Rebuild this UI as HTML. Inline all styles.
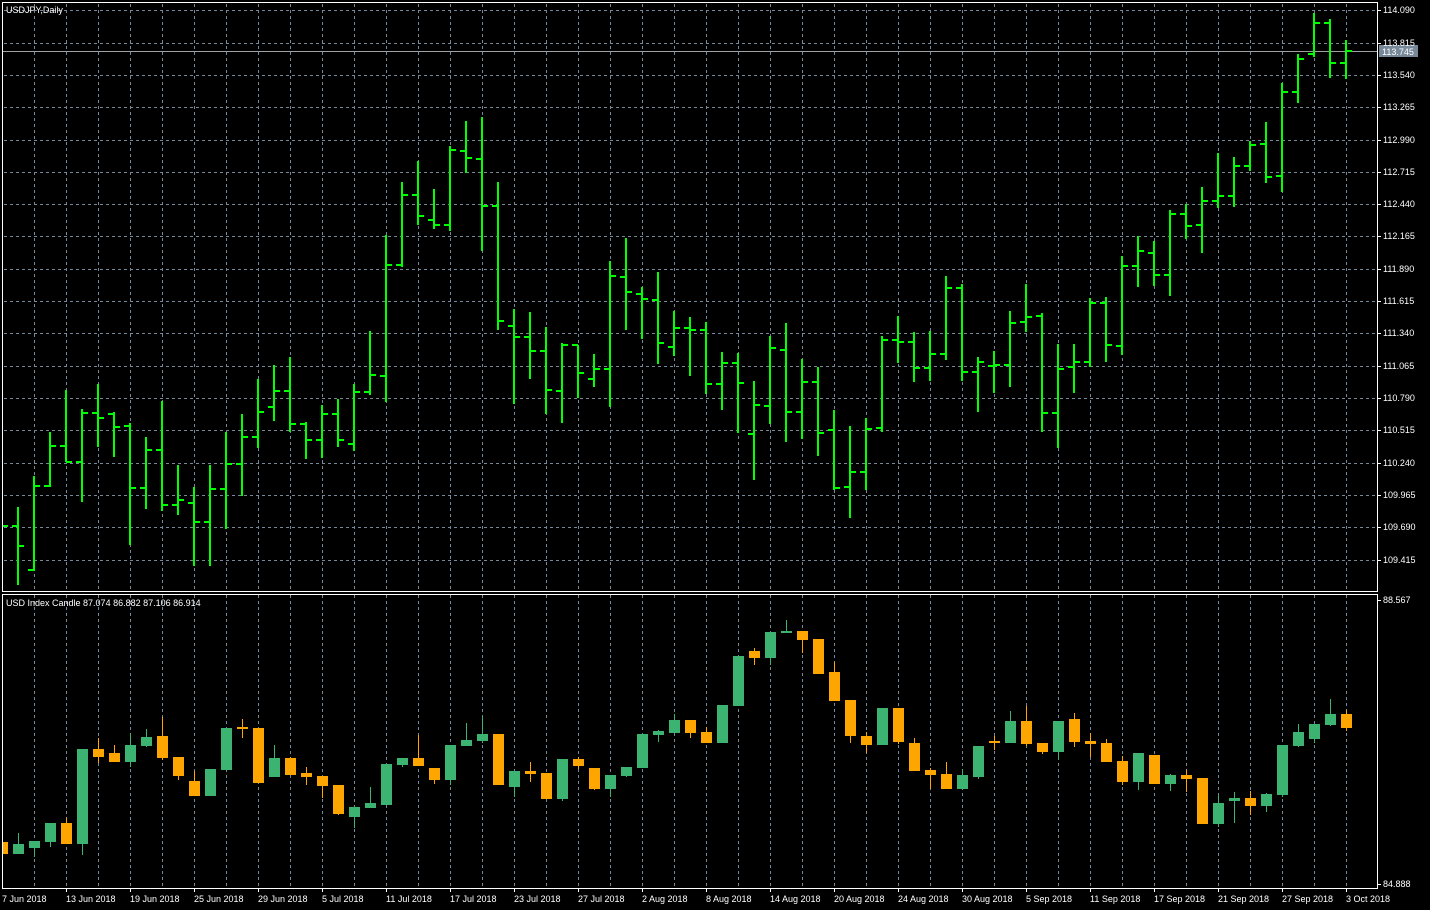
<!DOCTYPE html>
<html><head><meta charset="utf-8"><style>
html,body{margin:0;padding:0;background:#000;width:1430px;height:910px;overflow:hidden}
svg{display:block}
text{font-family:"Liberation Sans",sans-serif;font-size:9px;fill:#fff}
</style></head><body>
<svg width="1430" height="910" viewBox="0 0 1430 910" xmlns="http://www.w3.org/2000/svg">
<rect width="1430" height="910" fill="#000"/>
<!-- vertical grid -->
<g stroke="#778899" stroke-width="1" stroke-dasharray="3,3">
<path d="M34.5 4V591M66.5 4V591M98.5 4V591M130.5 4V591M162.5 4V591M194.5 4V591M226.5 4V591M258.5 4V591M290.5 4V591M322.5 4V591M354.5 4V591M386.5 4V591M418.5 4V591M450.5 4V591M482.5 4V591M514.5 4V591M546.5 4V591M578.5 4V591M610.5 4V591M642.5 4V591M674.5 4V591M706.5 4V591M738.5 4V591M770.5 4V591M802.5 4V591M834.5 4V591M866.5 4V591M898.5 4V591M930.5 4V591M962.5 4V591M994.5 4V591M1026.5 4V591M1058.5 4V591M1090.5 4V591M1122.5 4V591M1154.5 4V591M1186.5 4V591M1218.5 4V591M1250.5 4V591M1282.5 4V591M1314.5 4V591M1346.5 4V591"/>
<path d="M34.5 595V888M66.5 595V888M98.5 595V888M130.5 595V888M162.5 595V888M194.5 595V888M226.5 595V888M258.5 595V888M290.5 595V888M322.5 595V888M354.5 595V888M386.5 595V888M418.5 595V888M450.5 595V888M482.5 595V888M514.5 595V888M546.5 595V888M578.5 595V888M610.5 595V888M642.5 595V888M674.5 595V888M706.5 595V888M738.5 595V888M770.5 595V888M802.5 595V888M834.5 595V888M866.5 595V888M898.5 595V888M930.5 595V888M962.5 595V888M994.5 595V888M1026.5 595V888M1058.5 595V888M1090.5 595V888M1122.5 595V888M1154.5 595V888M1186.5 595V888M1218.5 595V888M1250.5 595V888M1282.5 595V888M1314.5 595V888M1346.5 595V888"/>
<path d="M4 10.5H1377M4 43.5H1377M4 75.5H1377M4 107.5H1377M4 140.5H1377M4 172.5H1377M4 204.5H1377M4 236.5H1377M4 269.5H1377M4 301.5H1377M4 333.5H1377M4 366.5H1377M4 398.5H1377M4 430.5H1377M4 463.5H1377M4 495.5H1377M4 527.5H1377M4 560.5H1377"/>
</g>
<!-- current price line -->
<path d="M3 51.5H1377" stroke="#a0a0a0" stroke-width="1"/>
<!-- frames -->
<g fill="none" stroke="#fff" stroke-width="1">
<path d="M2.5 2.5H1377.5V591.5H2.5Z"/>
<path d="M2.5 594.5H1377.5V888.5H2.5Z"/>
</g>
<!-- axis ticks -->
<g stroke="#fff" stroke-width="1">
<path d="M1377 10.5h4M1377 43.5h4M1377 75.5h4M1377 107.5h4M1377 140.5h4M1377 172.5h4M1377 204.5h4M1377 236.5h4M1377 269.5h4M1377 301.5h4M1377 333.5h4M1377 366.5h4M1377 398.5h4M1377 430.5h4M1377 463.5h4M1377 495.5h4M1377 527.5h4M1377 560.5h4M1377 600.5h4M1377 884.5h4"/>
<path d="M66.5 888v4M130.5 888v4M194.5 888v4M258.5 888v4M322.5 888v4M386.5 888v4M450.5 888v4M514.5 888v4M578.5 888v4M642.5 888v4M706.5 888v4M770.5 888v4M834.5 888v4M898.5 888v4M962.5 888v4M1026.5 888v4M1090.5 888v4M1154.5 888v4M1218.5 888v4M1282.5 888v4M1346.5 888v4"/>
</g>
<!-- OHLC bars -->
<path fill="none" stroke="#00ff00" stroke-width="2" d="
M3 526H8
M18 507V585M12 526H18M18 546H24
M34 476V571M28 570H34M34 486H40
M50 432V487M44 486H50M50 446H56
M66 390V462M60 446H66M66 462H72
M82 409V502M76 462H82M82 413H88
M98 384V447M92 413H98M98 418H104
M114 412V457M108 414H114M114 427H120
M130 423V545M124 426H130M130 488H136
M146 437V509M140 488H146M146 450H152
M162 401V511M156 450H162M162 505H168
M178 465V515M172 505H178M178 500H184
M194 487V566M188 503H194M194 522H200
M210 465V566M204 522H210M210 489H216
M226 432V529M220 489H226M226 464H232
M242 414V496M236 464H242M242 437H248
M258 379V448M252 437H258M258 412H264
M274 365V421M268 407H274M274 391H280
M290 357V432M284 391H290M290 424H296
M306 422V459M300 424H306M306 440H312
M322 405V458M316 440H322M322 414H328
M338 399V447M332 414H338M338 440H344
M354 384V451M348 444H354M354 392H360
M370 331V395M364 392H370M370 375H376
M386 235V402M380 376H386M386 265H392
M402 182V267M396 265H402M402 195H408
M418 161V225M412 195H418M418 216H424
M434 189V229M428 220H434M434 225H440
M450 146V231M444 225H450M450 150H456
M466 121V173M460 151H466M466 158H472
M482 117V251M476 159H482M482 206H488
M498 182V330M492 206H498M498 321H504
M514 309V404M508 326H514M514 337H520
M530 312V379M524 337H530M530 351H536
M546 327V414M540 351H546M546 390H552
M562 343V423M556 391H562M562 345H568
M578 345V398M572 345H578M578 373H584
M594 354V387M588 379H594M594 369H600
M610 261V407M604 369H610M610 276H616
M626 238V330M620 277H626M626 292H632
M642 287V339M636 294H642M642 299H648
M658 272V364M652 300H658M658 343H664
M674 311V356M668 347H674M674 328H680
M690 317V376M684 328H690M690 330H696
M706 322V394M700 330H706M706 384H712
M722 352V410M716 384H722M722 363H728
M738 353V433M732 363H738M738 383H744
M754 381V480M748 434H754M754 405H760
M770 336V424M764 406H770M770 348H776
M786 323V442M780 350H786M786 412H792
M802 359V439M796 412H802M802 382H808
M818 367V456M812 382H818M818 433H824
M834 410V490M828 430H834M834 488H840
M850 426V518M844 487H850M850 472H856
M866 418V490M860 472H866M866 429H872
M882 336V432M876 428H882M882 340H888
M898 316V363M892 340H898M898 342H904
M914 332V382M908 342H914M914 368H920
M930 331V381M924 368H930M930 354H936
M946 276V360M940 354H946M946 288H952
M962 284V381M956 288H962M962 372H968
M978 357V412M972 372H978M978 362H984
M994 351V393M988 366H994M994 365H1000
M1010 311V387M1004 365H1010M1010 323H1016
M1026 284V332M1020 322H1026M1026 317H1032
M1042 313V432M1036 316H1042M1042 413H1048
M1058 344V448M1052 413H1058M1058 369H1064
M1074 344V393M1068 367H1074M1074 362H1080
M1090 298V367M1084 362H1090M1090 303H1096
M1106 297V362M1100 303H1106M1106 345H1112
M1122 256V355M1116 346H1122M1122 266H1128
M1138 236V287M1132 266H1138M1138 251H1144
M1154 241V286M1148 253H1154M1154 275H1160
M1170 210V296M1164 275H1170M1170 214H1176
M1186 204V239M1180 214H1186M1186 226H1192
M1202 187V253M1196 225H1202M1202 201H1208
M1218 153V208M1212 201H1218M1218 196H1224
M1234 157V207M1228 196H1234M1234 166H1240
M1250 141V171M1244 166H1250M1250 145H1256
M1266 122V183M1260 144H1266M1266 177H1272
M1282 83V192M1276 176H1282M1282 92H1288
M1298 54V103M1292 92H1298M1298 59H1304
M1314 13V57M1308 54H1314M1314 23H1320
M1330 19V78M1324 23H1330M1330 63H1336
M1346 40V79M1340 63H1346M1346 51H1352"/>
<!-- candles green -->
<g fill="#3cb371">
<path stroke="#3cb371" stroke-width="1" fill="none" d="M18.5 833V854M34.5 841V857M50.5 842V847M82.5 844V855M130.5 733V767M146.5 729V747M274.5 745V758M354.5 806V828M370.5 787V803M402.5 765V767M450.5 780V785M466.5 723V740M482.5 716V743M514.5 787V797M562.5 799V801M610.5 789V797M626.5 776V777M658.5 730V742M674.5 714V720M770.5 658V665M786.5 620V631M962.5 769V775M978.5 777V779M1010.5 711V721M1058.5 752V760M1138.5 782V790M1170.5 774V791M1218.5 795V827M1234.5 792V823M1266.5 793V812M1282.5 795V797M1298.5 724V747M1314.5 739V743M1330.5 699V726"/>
<rect x="13" y="844" width="11" height="10"/>
<rect x="29" y="841" width="11" height="7"/>
<rect x="45" y="823" width="11" height="19"/>
<rect x="77" y="749" width="11" height="95"/>
<rect x="125" y="745" width="11" height="17"/>
<rect x="141" y="737" width="11" height="9"/>
<rect x="205" y="769" width="11" height="27"/>
<rect x="221" y="728" width="11" height="42"/>
<rect x="269" y="758" width="11" height="19"/>
<rect x="349" y="807" width="11" height="10"/>
<rect x="365" y="803" width="11" height="5"/>
<rect x="381" y="764" width="11" height="41"/>
<rect x="397" y="758" width="11" height="7"/>
<rect x="445" y="745" width="11" height="35"/>
<rect x="461" y="740" width="11" height="6"/>
<rect x="477" y="734" width="11" height="7"/>
<rect x="509" y="771" width="11" height="16"/>
<rect x="557" y="759" width="11" height="40"/>
<rect x="605" y="775" width="11" height="14"/>
<rect x="621" y="767" width="11" height="9"/>
<rect x="637" y="734" width="11" height="34"/>
<rect x="653" y="731" width="11" height="4"/>
<rect x="669" y="720" width="11" height="13"/>
<rect x="717" y="705" width="11" height="38"/>
<rect x="733" y="656" width="11" height="50"/>
<rect x="765" y="632" width="11" height="26"/>
<rect x="781" y="631" width="11" height="2"/>
<rect x="877" y="708" width="11" height="37"/>
<rect x="957" y="775" width="11" height="14"/>
<rect x="973" y="746" width="11" height="31"/>
<rect x="1005" y="721" width="11" height="22"/>
<rect x="1053" y="721" width="11" height="31"/>
<rect x="1133" y="753" width="11" height="29"/>
<rect x="1165" y="775" width="11" height="9"/>
<rect x="1213" y="803" width="11" height="21"/>
<rect x="1229" y="798" width="11" height="3"/>
<rect x="1261" y="794" width="11" height="12"/>
<rect x="1277" y="745" width="11" height="50"/>
<rect x="1293" y="732" width="11" height="14"/>
<rect x="1309" y="724" width="11" height="15"/>
<rect x="1325" y="714" width="11" height="11"/>
</g>
<!-- candles orange -->
<g fill="#ffa500">
<path stroke="#ffa500" stroke-width="1" fill="none" d="M66.5 818V823M98.5 738V763M114.5 745V753M162.5 717V760M178.5 776V780M194.5 771V781M242.5 719V738M290.5 757V758M306.5 767V785M322.5 786V798M338.5 814V815M418.5 735V758M434.5 780V784M530.5 762V782M578.5 757V769M594.5 789V790M690.5 733V738M706.5 727V732M754.5 648V665M802.5 640V653M834.5 662V672M850.5 736V743M866.5 732V753M898.5 742V744M914.5 738V743M930.5 768V789M946.5 762V774M994.5 736V750M1026.5 706V746M1042.5 752V754M1074.5 713V747M1090.5 733V757M1106.5 739V743M1122.5 756V785M1186.5 770V792M1250.5 791V815M1346.5 710V731"/>
<rect x="3" y="842" width="5" height="12"/>
<rect x="61" y="823" width="11" height="21"/>
<rect x="93" y="749" width="11" height="8"/>
<rect x="109" y="753" width="11" height="9"/>
<rect x="157" y="736" width="11" height="22"/>
<rect x="173" y="757" width="11" height="19"/>
<rect x="189" y="781" width="11" height="15"/>
<rect x="237" y="727" width="11" height="2"/>
<rect x="253" y="728" width="11" height="55"/>
<rect x="285" y="758" width="11" height="17"/>
<rect x="301" y="773" width="11" height="4"/>
<rect x="317" y="776" width="11" height="10"/>
<rect x="333" y="785" width="11" height="29"/>
<rect x="413" y="758" width="11" height="8"/>
<rect x="429" y="768" width="11" height="12"/>
<rect x="493" y="734" width="11" height="51"/>
<rect x="525" y="771" width="11" height="3"/>
<rect x="541" y="773" width="11" height="26"/>
<rect x="573" y="759" width="11" height="7"/>
<rect x="589" y="768" width="11" height="21"/>
<rect x="685" y="720" width="11" height="13"/>
<rect x="701" y="732" width="11" height="11"/>
<rect x="749" y="651" width="11" height="7"/>
<rect x="797" y="631" width="11" height="9"/>
<rect x="813" y="639" width="11" height="35"/>
<rect x="829" y="672" width="11" height="29"/>
<rect x="845" y="700" width="11" height="36"/>
<rect x="861" y="736" width="11" height="9"/>
<rect x="893" y="708" width="11" height="34"/>
<rect x="909" y="743" width="11" height="28"/>
<rect x="925" y="770" width="11" height="5"/>
<rect x="941" y="774" width="11" height="15"/>
<rect x="989" y="741" width="11" height="2"/>
<rect x="1021" y="721" width="11" height="23"/>
<rect x="1037" y="743" width="11" height="9"/>
<rect x="1069" y="719" width="11" height="23"/>
<rect x="1085" y="741" width="11" height="3"/>
<rect x="1101" y="743" width="11" height="19"/>
<rect x="1117" y="761" width="11" height="21"/>
<rect x="1149" y="755" width="11" height="29"/>
<rect x="1181" y="775" width="11" height="4"/>
<rect x="1197" y="778" width="11" height="46"/>
<rect x="1245" y="798" width="11" height="8"/>
<rect x="1341" y="714" width="11" height="14"/>
</g>
<!-- titles -->
<text x="6" y="13">USDJPY,Daily</text>
<text x="6" y="606">USD Index Candle 87.074 86.882 87.106 86.914</text>
<!-- price labels -->
<rect x="1379" y="45" width="39" height="12" fill="#778899"/>
<g>
<text x="1383" y="13">114.090</text>
<text x="1383" y="46">113.815</text>
<text x="1382" y="55">113.745</text>
<text x="1383" y="78">113.540</text>
<text x="1383" y="110">113.265</text>
<text x="1383" y="143">112.990</text>
<text x="1383" y="175">112.715</text>
<text x="1383" y="207">112.440</text>
<text x="1383" y="239">112.165</text>
<text x="1383" y="272">111.890</text>
<text x="1383" y="304">111.615</text>
<text x="1383" y="336">111.340</text>
<text x="1383" y="369">111.065</text>
<text x="1383" y="401">110.790</text>
<text x="1383" y="433">110.515</text>
<text x="1383" y="466">110.240</text>
<text x="1383" y="498">109.965</text>
<text x="1383" y="530">109.690</text>
<text x="1383" y="563">109.415</text>
<text x="1383" y="603">88.567</text>
<text x="1383" y="887">84.888</text>
</g>
<!-- dates -->
<g>
<text x="2" y="902">7 Jun 2018</text>
<text x="66" y="902">13 Jun 2018</text>
<text x="130" y="902">19 Jun 2018</text>
<text x="194" y="902">25 Jun 2018</text>
<text x="258" y="902">29 Jun 2018</text>
<text x="322" y="902">5 Jul 2018</text>
<text x="386" y="902">11 Jul 2018</text>
<text x="450" y="902">17 Jul 2018</text>
<text x="514" y="902">23 Jul 2018</text>
<text x="578" y="902">27 Jul 2018</text>
<text x="642" y="902">2 Aug 2018</text>
<text x="706" y="902">8 Aug 2018</text>
<text x="770" y="902">14 Aug 2018</text>
<text x="834" y="902">20 Aug 2018</text>
<text x="898" y="902">24 Aug 2018</text>
<text x="962" y="902">30 Aug 2018</text>
<text x="1026" y="902">5 Sep 2018</text>
<text x="1090" y="902">11 Sep 2018</text>
<text x="1154" y="902">17 Sep 2018</text>
<text x="1218" y="902">21 Sep 2018</text>
<text x="1282" y="902">27 Sep 2018</text>
<text x="1346" y="902">3 Oct 2018</text>
</g>
</svg>
</body></html>
